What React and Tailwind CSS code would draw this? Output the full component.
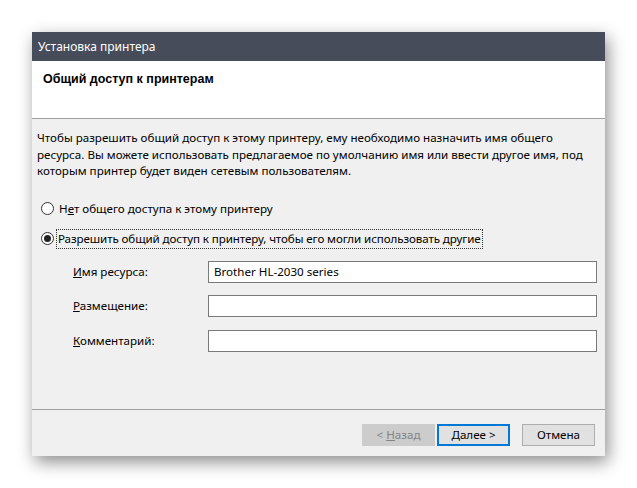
export default function App() {
  const font = { fontFamily: '"Noto Sans", "Open Sans", sans-serif' }
  return (
    <div className="w-[637px] h-[488px] bg-white pt-[32px] pl-[32px]" style={font}>
      <div className="w-[573px] h-[424px] flex flex-col bg-[#f0f0f0] shadow-[3px_6px_16px_rgba(0,0,0,0.45)]">
        {/* title bar */}
        <div className="h-[29px] bg-[#464c5a] text-white text-[12px] flex items-center pl-[6px] shrink-0">
          Установка принтера
        </div>

        {/* header */}
        <div className="h-[58px] bg-white border-b border-[#a0a0a0] shrink-0 pl-[11px] pt-[9px]">
          <div className="text-[12.5px] font-bold text-black" style={{ fontFamily: '"Liberation Sans", Arial, sans-serif' }}>
            Общий доступ к принтерам
          </div>
        </div>

        {/* body */}
        <div className="flex-1 pl-[5px] pt-[11px] text-[11.6px] text-[#000] border-b border-[#a0a0a0]">
          <div className="leading-[16.5px] whitespace-nowrap">
            <div>Чтобы разрешить общий доступ к этому принтеру, ему необходимо назначить имя общего</div>
            <div>ресурса. Вы можете использовать предлагаемое по умолчанию имя или ввести другое имя, под</div>
            <div>которым принтер будет виден сетевым пользователям.</div>
          </div>

          <div className="mt-[20px] flex items-center h-[18px]">
            <span className="w-[13px] h-[13px] rounded-full border border-[#333] bg-white ml-[4px] mr-[5px]" />
            <span>Н<u>е</u>т общего доступа к этому принтеру</span>
          </div>

          <div className="mt-[12px] flex items-center h-[18px]">
            <span className="w-[13px] h-[13px] rounded-full border border-[#333] bg-white ml-[4px] mr-[2px] flex items-center justify-center">
              <span className="w-[7px] h-[7px] rounded-full bg-[#222]" />
            </span>
            <span className="border border-dotted border-[#333] px-[1px] leading-[18px] tracking-[-0.1px]">
              Разрешить общий доступ к принтеру, чтобы его могли использовать другие
            </span>
          </div>

          <div className="mt-[13px] flex flex-col gap-[12.5px] pl-[36px]">
            {[
              ['И', 'мя ресурса:', 'Brother HL-2030 series'],
              ['Р', 'азмещение:', ''],
              ['К', 'омментарий:', ''],
            ].map(([k, rest, val]) => (
              <div key={rest} className="flex items-center h-[22px]">
                <div className="w-[135px]"><u>{k}</u>{rest}</div>
                <div className="w-[389px] h-[22px] bg-white border border-[#7a7a7a] flex items-center pl-[5px]">
                  {val}
                </div>
              </div>
            ))}
          </div>
        </div>

        {/* footer */}
        <div className="h-[46px] shrink-0 flex items-start justify-end pt-[14px] pr-[10px] text-[11.6px]">
          <button className="w-[73px] h-[22px] bg-[#cccccc] border border-[#cccccc] text-[#838383]">
            &lt; <u>Н</u>азад
          </button>
          <button className="w-[73px] h-[22px] ml-[2px] bg-[#e1e1e1] border-2 border-[#0078d7] text-black">
            <u>Д</u>алее &gt;
          </button>
          <button className="w-[73px] h-[22px] ml-[12px] bg-[#e1e1e1] border border-[#adadad] text-black">
            Отмена
          </button>
        </div>
      </div>
    </div>
  )
}
